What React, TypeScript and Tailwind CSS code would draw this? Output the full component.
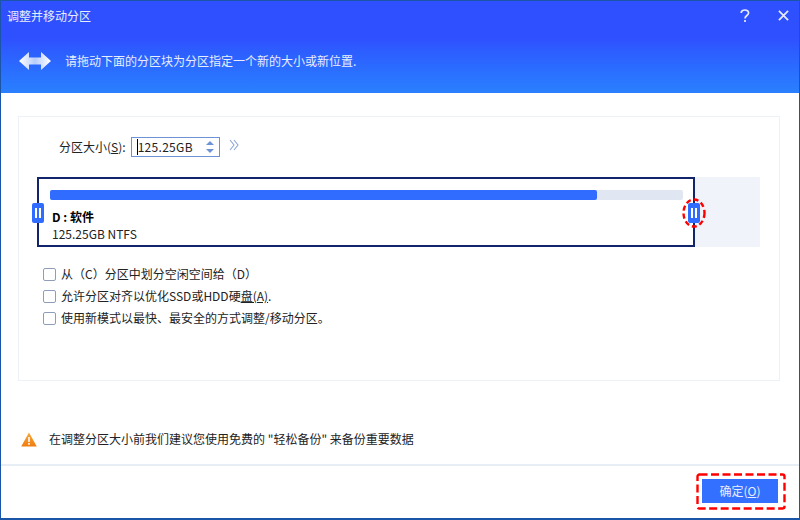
import * as React from "react"

const FONT = "font-['Noto_Sans_CJK_SC','Noto_Sans',sans-serif]"

function Grip() {
  return (
    <div className="flex h-[20px] w-[12px] items-center justify-center gap-[2px] rounded-[2px] bg-[#306cff]">
      <span className="h-[10px] w-[2px] bg-white" />
      <span className="h-[10px] w-[2px] bg-white" />
    </div>
  )
}

function Option({ children }: { children: React.ReactNode }) {
  return (
    <label className="flex h-[22px] items-center gap-[5px]">
      <span className="h-[13px] w-[13px] rounded-[2px] border border-[#8f9db8] bg-white" />
      <span>{children}</span>
    </label>
  )
}

export default function App() {
  return (
    <div className={`${FONT} flex h-[520px] w-[800px] flex-col overflow-hidden border border-b-2 border-[#1a55a8] bg-white text-[12px] leading-[16px] text-[#222]`}>
      <header className="flex h-[92px] shrink-0 flex-col bg-gradient-to-b from-[#2f50ff] from-40% to-[#2a80ff] text-white">
        <div className="flex h-[29px] items-center justify-between pl-[6px] pr-[10px]">
          <span className="text-[#e8eeff]">调整并移动分区</span>
          <div className="flex items-center gap-[28px] text-[#e4eaff]">
            <svg width="10" height="14" viewBox="0 0 10 14" fill="none" stroke="currentColor" strokeWidth="1.7">
              <path d="M1.2 4C1.2 2 2.8 1 4.8 1S8.6 2.2 8.6 4c0 2.4-3.6 2.6-3.6 5.4" />
              <path d="M5 11v2" />
            </svg>
            <svg width="11" height="11" viewBox="0 0 12 12" stroke="currentColor" strokeWidth="1.9">
              <path d="M1 1l10 10M11 1L1 11" />
            </svg>
          </div>
        </div>
        <div className="flex items-center gap-[14px] pl-[18px] pt-[22px]">
          <svg width="32" height="18" viewBox="0 0 32 18">
            <defs>
              <linearGradient id="arrow" x1="0" y1="0" x2="1" y2="0">
                <stop offset="0" stopColor="#ffffff" />
                <stop offset="0.5" stopColor="#b9cdfb" />
                <stop offset="1" stopColor="#ffffff" />
              </linearGradient>
            </defs>
            <path d="M0 9L10 0V5.5H22V0L32 9L22 18V12.5H10V18Z" fill="url(#arrow)" />
          </svg>
          <span className="text-[#e8eeff]">请拖动下面的分区块为分区指定一个新的大小或新位置.</span>
        </div>
      </header>

      <main className="flex flex-1 flex-col pl-[17px] pr-[19px] pt-[23px]">
        <section className="flex h-[265px] flex-col border border-[#eef1f7] pl-[18px]">
          <div className="flex h-[60px] items-start pl-[22px] pt-[20px]">
            <div className="flex h-[20px] items-center">
              分区大小(<span className="underline">S</span>):
            </div>
            <div className="ml-[5px] flex h-[20px] w-[89px] items-center justify-between border border-[#6d93d6] pl-[5px] pr-[4px]">
              <span className="border-l border-black tracking-[0.3px]">125.25GB</span>
              <svg width="10" height="14" viewBox="0 0 10 14" fill="#6d93d6">
                <path d="M5 1l4 4H1zM5 13L1 9h8z" />
              </svg>
            </div>
            <svg className="ml-[9px] mt-[2px]" width="10" height="12" viewBox="0 0 10 12" fill="none" stroke="#8ea6d6" strokeWidth="1.1">
              <path d="M1 1l4 5-4 5M5 1l4 5-4 5" />
            </svg>
          </div>

          <div className="relative flex h-[70px] w-[723px] bg-[#f0f3fa]">
            <div className="h-[70px] w-[658px] border-2 border-[#12246b] bg-white pl-[11px] pr-[10px] pt-[11px]">
              <div className="h-[10px] w-full rounded-[2px] bg-[#e0e6f2]">
                <div className="h-[10px] w-[547px] rounded-[2px] bg-[#306cff]" />
              </div>
              <div className="ml-[2px] mt-[9px] font-bold text-black">D : 软件</div>
              <div className="ml-[2px] mt-[1px] text-[#222]">125.25GB NTFS</div>
            </div>
            <div className="absolute left-[-5px] top-[26px]">
              <Grip />
            </div>
            <div className="absolute left-[651px] top-[26px]">
              <Grip />
            </div>
            <svg className="absolute left-[645px] top-[21px]" width="24" height="30" viewBox="0 0 24 30" fill="none" stroke="#ff0000" strokeWidth="2.4" strokeDasharray="5 3">
              <ellipse cx="12" cy="15" rx="10.5" ry="13.5" />
            </svg>
          </div>

          <div className="mt-[16px] flex flex-col pl-[6px]">
            <Option>从（C）分区中划分空闲空间给（D）</Option>
            <Option>
              允许分区对齐以优化SSD或HDD硬<span className="underline">盘(A)</span>.
            </Option>
            <Option>使用新模式以最快、最安全的方式调整/移动分区。</Option>
          </div>
        </section>

        <div className="mt-[50px] flex items-center gap-[12px] pl-[3px]">
          <svg width="16" height="15" viewBox="0 0 16 15">
            <defs>
              <linearGradient id="warn" x1="0" y1="0" x2="0" y2="1">
                <stop offset="0" stopColor="#f9a63a" />
                <stop offset="1" stopColor="#ef7d10" />
              </linearGradient>
            </defs>
            <path d="M8 0.5L15.8 14.5H0.2Z" fill="url(#warn)" />
            <path d="M7.2 5h1.6v5H7.2zM7.2 11h1.6v1.8H7.2z" fill="#fff" />
          </svg>
          <span className="text-[#222]">在调整分区大小前我们建议您使用免费的 "轻松备份" 来备份重要数据</span>
        </div>
      </main>

      <footer className="relative flex h-[54px] shrink-0 items-start justify-end border-t-2 border-[#e8eef5] pr-[21px] pt-[13px]">
        <button className="h-[24px] w-[76px] bg-[#3370ff] text-[#e8eeff]">
          确定(<span className="underline">O</span>)
        </button>
        <svg className="absolute right-[13px] top-[7px]" width="90" height="37" viewBox="0 0 90 37" fill="none" stroke="#ff0000" strokeWidth="2.4" strokeDasharray="8 3.5">
          <rect x="1.5" y="1.5" width="87" height="34" rx="2" />
        </svg>
      </footer>
    </div>
  )
}
